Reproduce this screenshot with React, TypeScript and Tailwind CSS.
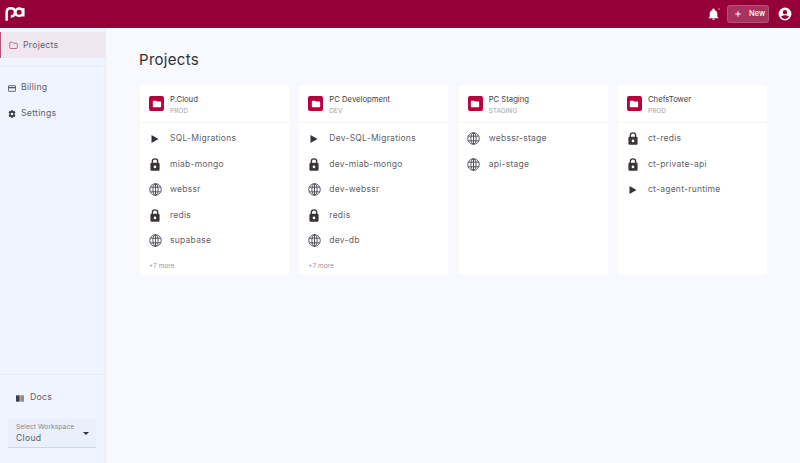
import { Plus, Folder } from "lucide-react";

type Row = { kind: "play" | "lock" | "globe"; name: string };
type Project = { name: string; env: string; rows: Row[]; more?: string };

const projects: Project[] = [
  {
    name: "P.Cloud",
    env: "PROD",
    more: "+7 more",
    rows: [
      { kind: "play", name: "SQL-Migrations" },
      { kind: "lock", name: "miab-mongo" },
      { kind: "globe", name: "webssr" },
      { kind: "lock", name: "redis" },
      { kind: "globe", name: "supabase" },
    ],
  },
  {
    name: "PC Development",
    env: "DEV",
    more: "+7 more",
    rows: [
      { kind: "play", name: "Dev-SQL-Migrations" },
      { kind: "lock", name: "dev-miab-mongo" },
      { kind: "globe", name: "dev-webssr" },
      { kind: "lock", name: "redis" },
      { kind: "globe", name: "dev-db" },
    ],
  },
  {
    name: "PC Staging",
    env: "STAGING",
    rows: [
      { kind: "globe", name: "webssr-stage" },
      { kind: "globe", name: "api-stage" },
    ],
  },
  {
    name: "ChefsTower",
    env: "PROD",
    rows: [
      { kind: "lock", name: "ct-redis" },
      { kind: "lock", name: "ct-private-api" },
      { kind: "play", name: "ct-agent-runtime" },
    ],
  },
];

function RowIcon({ kind }: { kind: Row["kind"] }) {
  if (kind === "play")
    return (
      <svg viewBox="0 0 8 8" className="w-[8px] h-[8px] fill-[#33333b]">
        <path d="M0.5 0v8l7-4z" />
      </svg>
    );
  if (kind === "lock")
    return (
      <svg viewBox="0 0 12 15" className="w-[10px] h-[13px] fill-[#3a3438]">
        <path d="M10 5.5V4a4 4 0 0 0-8 0v1.5a1.5 1.5 0 0 0-1.5 1.5v6.5A1.5 1.5 0 0 0 2 15h8a1.5 1.5 0 0 0 1.5-1.5V7A1.5 1.5 0 0 0 10 5.5zM3.6 4a2.4 2.4 0 0 1 4.8 0v1.5H3.6V4zM6 12a1.6 1.6 0 1 1 0-3.200 1.600 1.600 0 0 1 0 3.200z" />
      </svg>
    );
  return (
    <svg viewBox="0 0 14 14" className="w-[13px] h-[13px]" fill="none" stroke="#4a4a52" strokeWidth="1">
      <circle cx="7" cy="7" r="6.2" />
      <ellipse cx="7" cy="7" rx="2.8" ry="6.2" />
      <path d="M7 .8v12.400M1.500 4.500h11M1.500 9.500h11" />
    </svg>
  );
}

function ProjectCard({ project }: { project: Project }) {
  return (
    <div className="w-[149px] h-[190px] bg-white rounded-[2px] flex flex-col">
      <div className="h-[38px] flex items-center gap-[6px] pl-[9px] border-b border-[#f3f4fa]">
        <div className="w-[15px] h-[15px] rounded-[2px] bg-[#b9003f] flex items-center justify-center">
          <svg viewBox="0 0 24 24" className="w-[10px] h-[10px] fill-white">
            <path d="M10 4H4a2 2 0 0 0-2 2v12a2 2 0 0 0 2 2h16a2 2 0 0 0 2-2V8a2 2 0 0 0-2-2h-8l-2-2z" />
          </svg>
        </div>
        <div className="flex flex-col pt-[4px]">
          <span className="text-[7.7px] leading-[10.500px] text-[#3c3c45]">{project.name}</span>
          <span className="text-[6.500px] leading-[10px] text-[#a2a2aa]">{project.env}</span>
        </div>
      </div>
      <div className="flex flex-col pt-[3px]">
        {project.rows.map((row) => (
          <div key={row.name} className="h-[25.500px] flex items-center">
            <div className="w-[30px] flex justify-center">
              <RowIcon kind={row.kind} />
            </div>
            <span className="text-[8.500px] tracking-[0.260px] text-[#5f5f68]">{row.name}</span>
          </div>
        ))}
      </div>
      {project.more && <span className="mt-[8px] pl-[9px] text-[6.500px] text-[#94949c]">{project.more}</span>}
    </div>
  );
}

export default function App() {
  return (
    <div className="w-[800px] h-[463px] flex flex-col overflow-hidden bg-[#f8f9fe] font-['Inter',sans-serif]">
      <header className="h-[28px] shrink-0 bg-[#950038] flex items-center justify-between pr-[8px] pl-[5px]">
        <svg viewBox="0 0 24 18" className="w-[20px] h-[16px]" fill="none" stroke="white" strokeWidth="3">
          <path d="M2 17V7c0-3 2-5 5-5s5 2 5 5-2 5-5 5" />
          <circle cx="17" cy="7" r="4.500" />
          <path d="M22 2v10" />
        </svg>
        <div className="flex items-center">
          <div className="relative mr-[7px]">
            <svg viewBox="0 0 24 24" className="w-[13px] h-[13px] fill-white">
              <path d="M12 22a2.500 2.500 0 0 0 2.400-2h-4.800a2.500 2.500 0 0 0 2.400 2zm7-6v-5.500c0-3.200-1.700-5.800-4.700-6.500V3a2.300 2.300 0 0 0-4.600 0v1C6.700 4.700 5 7.300 5 10.500V16l-2 2v1h18v-1l-2-2z" />
            </svg>
            <div className="absolute top-0 right-0 w-[2px] h-[2px] rounded-full bg-[#e8506e]" />
          </div>
          <div className="w-[42px] h-[18px] rounded-[3px] bg-[#a8335f] border border-[#b9527a] flex items-center gap-[7px] pl-[6px] mr-[9px]">
            <Plus className="w-[8px] h-[8px] text-white" strokeWidth={3} />
            <span className="text-[7.500px] font-medium text-white">New</span>
          </div>
          <svg viewBox="0 0 24 24" className="w-[14px] h-[14px] fill-white">
            <path d="M12 1a11 11 0 1 0 0 22 11 11 0 0 0 0-22zm0 4a3.800 3.800 0 1 1 0 7.600A3.800 3.800 0 0 1 12 5zm0 15.500c-2.900 0-5.400-1.400-6.900-3.600 1.300-1.800 4.300-2.800 6.900-2.800s5.600 1 6.900 2.800c-1.500 2.200-4 3.600-6.900 3.600z" />
          </svg>
        </div>
      </header>
      <div className="flex-1 flex min-h-0">
        <aside className="w-[106px] shrink-0 bg-[#eff4fe] border-r border-[#e9edf7] flex flex-col">
          <div className="mt-[4px] h-[26px] bg-[#f0e6f1] border-l border-[#b9527a] flex items-center pl-[8px] pt-[1px] gap-[5px]">
            <Folder className="w-[9px] h-[9px] text-[#b9406f]" />
            <span className="text-[8.700px] tracking-[0.260px] text-[#5f5f68]">Projects</span>
          </div>
          <div className="mt-[8px] border-b border-[#e6ebf6]" />
          <div className="mt-[8px] h-[26px] flex items-center pl-[8px] gap-[5px]">
            <svg viewBox="0 0 10 8" className="w-[8px] h-[7px] fill-none stroke-[#44444c]">
              <rect x="0.500" y="0.500" width="9" height="7" rx="0.500" />
              <path d="M0.500 3h9" strokeWidth="1.500" />
            </svg>
            <span className="text-[8.700px] tracking-[0.260px] text-[#5f5f68]">Billing</span>
          </div>
          <div className="h-[26px] flex items-center pl-[8px] gap-[5px]">
            <svg viewBox="0 0 24 24" className="w-[8px] h-[8px] fill-[#3a3a42]">
              <path fillRule="evenodd" d="M9 1h6l.8 3.300 2.900-1.700 3.700 5-2.500 2.400v4l2.500 2.400-3.700 5-2.900-1.700L15 23H9l-.8-3.300-2.900 1.700-3.700-5L4.100 14v-4L1.600 7.600l3.700-5 2.900 1.700L9 1zm3 7a4 4 0 1 0 0 8 4 4 0 0 0 0-8z" />
            </svg>
            <span className="text-[8.700px] tracking-[0.260px] text-[#5f5f68]">Settings</span>
          </div>
          <div className="mt-auto border-t border-[#e6ebf6] pt-[14px] pb-[15px]">
            <div className="flex items-center pl-[16px] gap-[6px] h-[18px]">
              <svg viewBox="0 0 10 8" className="w-[8px] h-[7px]">
                <rect x="0" y="0" width="4.600" height="8" fill="#3f3f48" />
                <rect x="5.400" y="0" width="4.600" height="8" fill="#8a8a94" />
              </svg>
              <span className="text-[8.700px] tracking-[0.260px] text-[#5f5f68]">Docs</span>
            </div>
            <div className="mt-[12px] ml-[8px] w-[88px] h-[29px] bg-[#e9effb] border-b border-[#cfd6e6] rounded-t-[3px] flex items-center justify-between pl-[8px] pr-[7px]">
              <div className="flex flex-col">
                <span className="text-[6.800px] leading-[10px] text-[#8a8a94]">Select Workspace</span>
                <span className="text-[8.700px] leading-[13px] tracking-[0.260px] text-[#5f5f68]">Cloud</span>
              </div>
              <div className="w-0 h-0 border-x-[3px] border-x-transparent border-t-[3px] border-t-[#33333c]" />
            </div>
          </div>
        </aside>
        <main className="flex-1 pl-[34px] pt-[21px]">
          <h1 className="-ml-[1px] text-[15px] leading-[22px] tracking-[0.300px] text-[#2f2f38] mb-[14px]">Projects</h1>
          <div className="flex gap-[10.330px]">
            {projects.map((p) => (
              <ProjectCard key={p.name} project={p} />
            ))}
          </div>
        </main>
      </div>
    </div>
  );
}
